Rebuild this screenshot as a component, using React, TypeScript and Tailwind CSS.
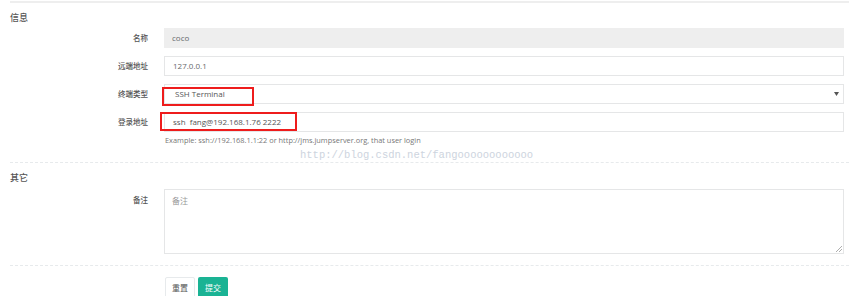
import React from 'react';

const cjk = "font-['Open_Sans','Noto_Sans_CJK_SC',sans-serif]";

function Row({ label, children }: { label: string; children: React.ReactNode }) {
    return (
        <div className="flex h-[20px] mb-[8px]">
            <div className="w-[164px] pr-[16px] flex items-center justify-end text-[7.5px] leading-[10px] font-medium text-[#555]">{label}</div>
            <div className="relative flex-1 h-full mr-[5px]">{children}</div>
        </div>
    );
}

export default function App() {
    return (
        <div className={`relative w-[849px] h-[296px] overflow-hidden bg-white text-[#676a6c] ${cjk}`}>
            {/* top divider */}
            <div className="ml-[10px] mt-[1px] border-t-2 border-[#eeeeee]" />

            <h3 className="ml-[10px] mt-[9px] text-[9px] leading-[12px] font-medium text-[#555]">信息</h3>

            <div className="mt-[4px]">
                <Row label="名称">
                    <div className="flex items-center w-full h-full px-[8px] bg-[#eeeeee] text-[8px]">coco</div>
                </Row>
                <Row label="远端地址">
                    <div className="flex items-center w-full h-full px-[8px] border border-[#e5e6e7] text-[8px]">127.0.0.1</div>
                </Row>
                <Row label="终端类型">
                    <div className="flex items-center w-full h-full pl-[10px] pr-[4px] border border-[#e5e6e7] text-[8px] text-[#555]">
                        <span className="flex-1">SSH Terminal</span>
                        <svg width="5" height="4" viewBox="0 0 5 4">
                            <path d="M0 0h5L2.5 4z" fill="#555" />
                        </svg>
                    </div>
                    <div className="absolute left-[-2px] top-[3px] w-[92px] h-[19px] border-2 border-[#ee1c1c]" />
                </Row>
                <Row label="登录地址">
                    <div className="flex items-center w-full h-full px-[8px] border border-[#e5e6e7] text-[8px] text-[#555] whitespace-pre">
                        ssh  fang@192.168.1.76 2222
                    </div>
                    <div className="absolute left-[-4px] top-0 w-[137px] h-[19px] border-2 border-[#ee1c1c]" />
                </Row>
            </div>

            <p className="ml-[165px] mt-[-6px] text-[7.4px] leading-[12px] text-[#777]">
                Example: ssh://192.168.1.1:22 or http://jms.jumpserver.org, that user login
            </p>

            {/* csdn watermark */}
            <div className="absolute left-[300px] top-[148px] text-[10.5px] leading-[14px] text-[#cdd4de] font-['Liberation_Mono',monospace]">
                http://blog.csdn.net/fangoooooooooooo
            </div>

            <div className="ml-[10px] mt-[16px] border-t border-dashed border-[#e7eaec]" />

            <h3 className="ml-[10px] mt-[9px] text-[9px] leading-[12px] font-medium text-[#555]">其它</h3>

            <div className="flex mt-[5px]">
                <div className="w-[164px] pr-[16px] pt-[6px] text-right text-[7.5px] leading-[10px] font-medium text-[#555]">备注</div>
                <div className="flex-1 mr-[5px] h-[65px] px-[7px] py-[5px] border border-[#e5e6e7] text-[8px] leading-[11px] text-[#999] relative">
                    备注
                    <svg width="6" height="6" viewBox="0 0 6 6" className="absolute right-[1px] bottom-[1px]">
                        <path d="M6 0L0 6M6 3L3 6" stroke="#999" strokeWidth="0.8" />
                    </svg>
                </div>
            </div>

            <div className="ml-[10px] mt-[11px] border-t border-dashed border-[#e7eaec]" />

            <div className="flex gap-[3px] ml-[165px] mt-[11px]">
                <div className="flex items-center justify-center w-[30px] h-[22px] border border-[#e7eaec] rounded-[2px] bg-white text-[8px] text-[#555]">重置</div>
                <div className="flex items-center justify-center w-[30px] h-[22px] rounded-[2px] bg-[#1ab394] text-[8px] text-white">提交</div>
            </div>
        </div>
    );
}
